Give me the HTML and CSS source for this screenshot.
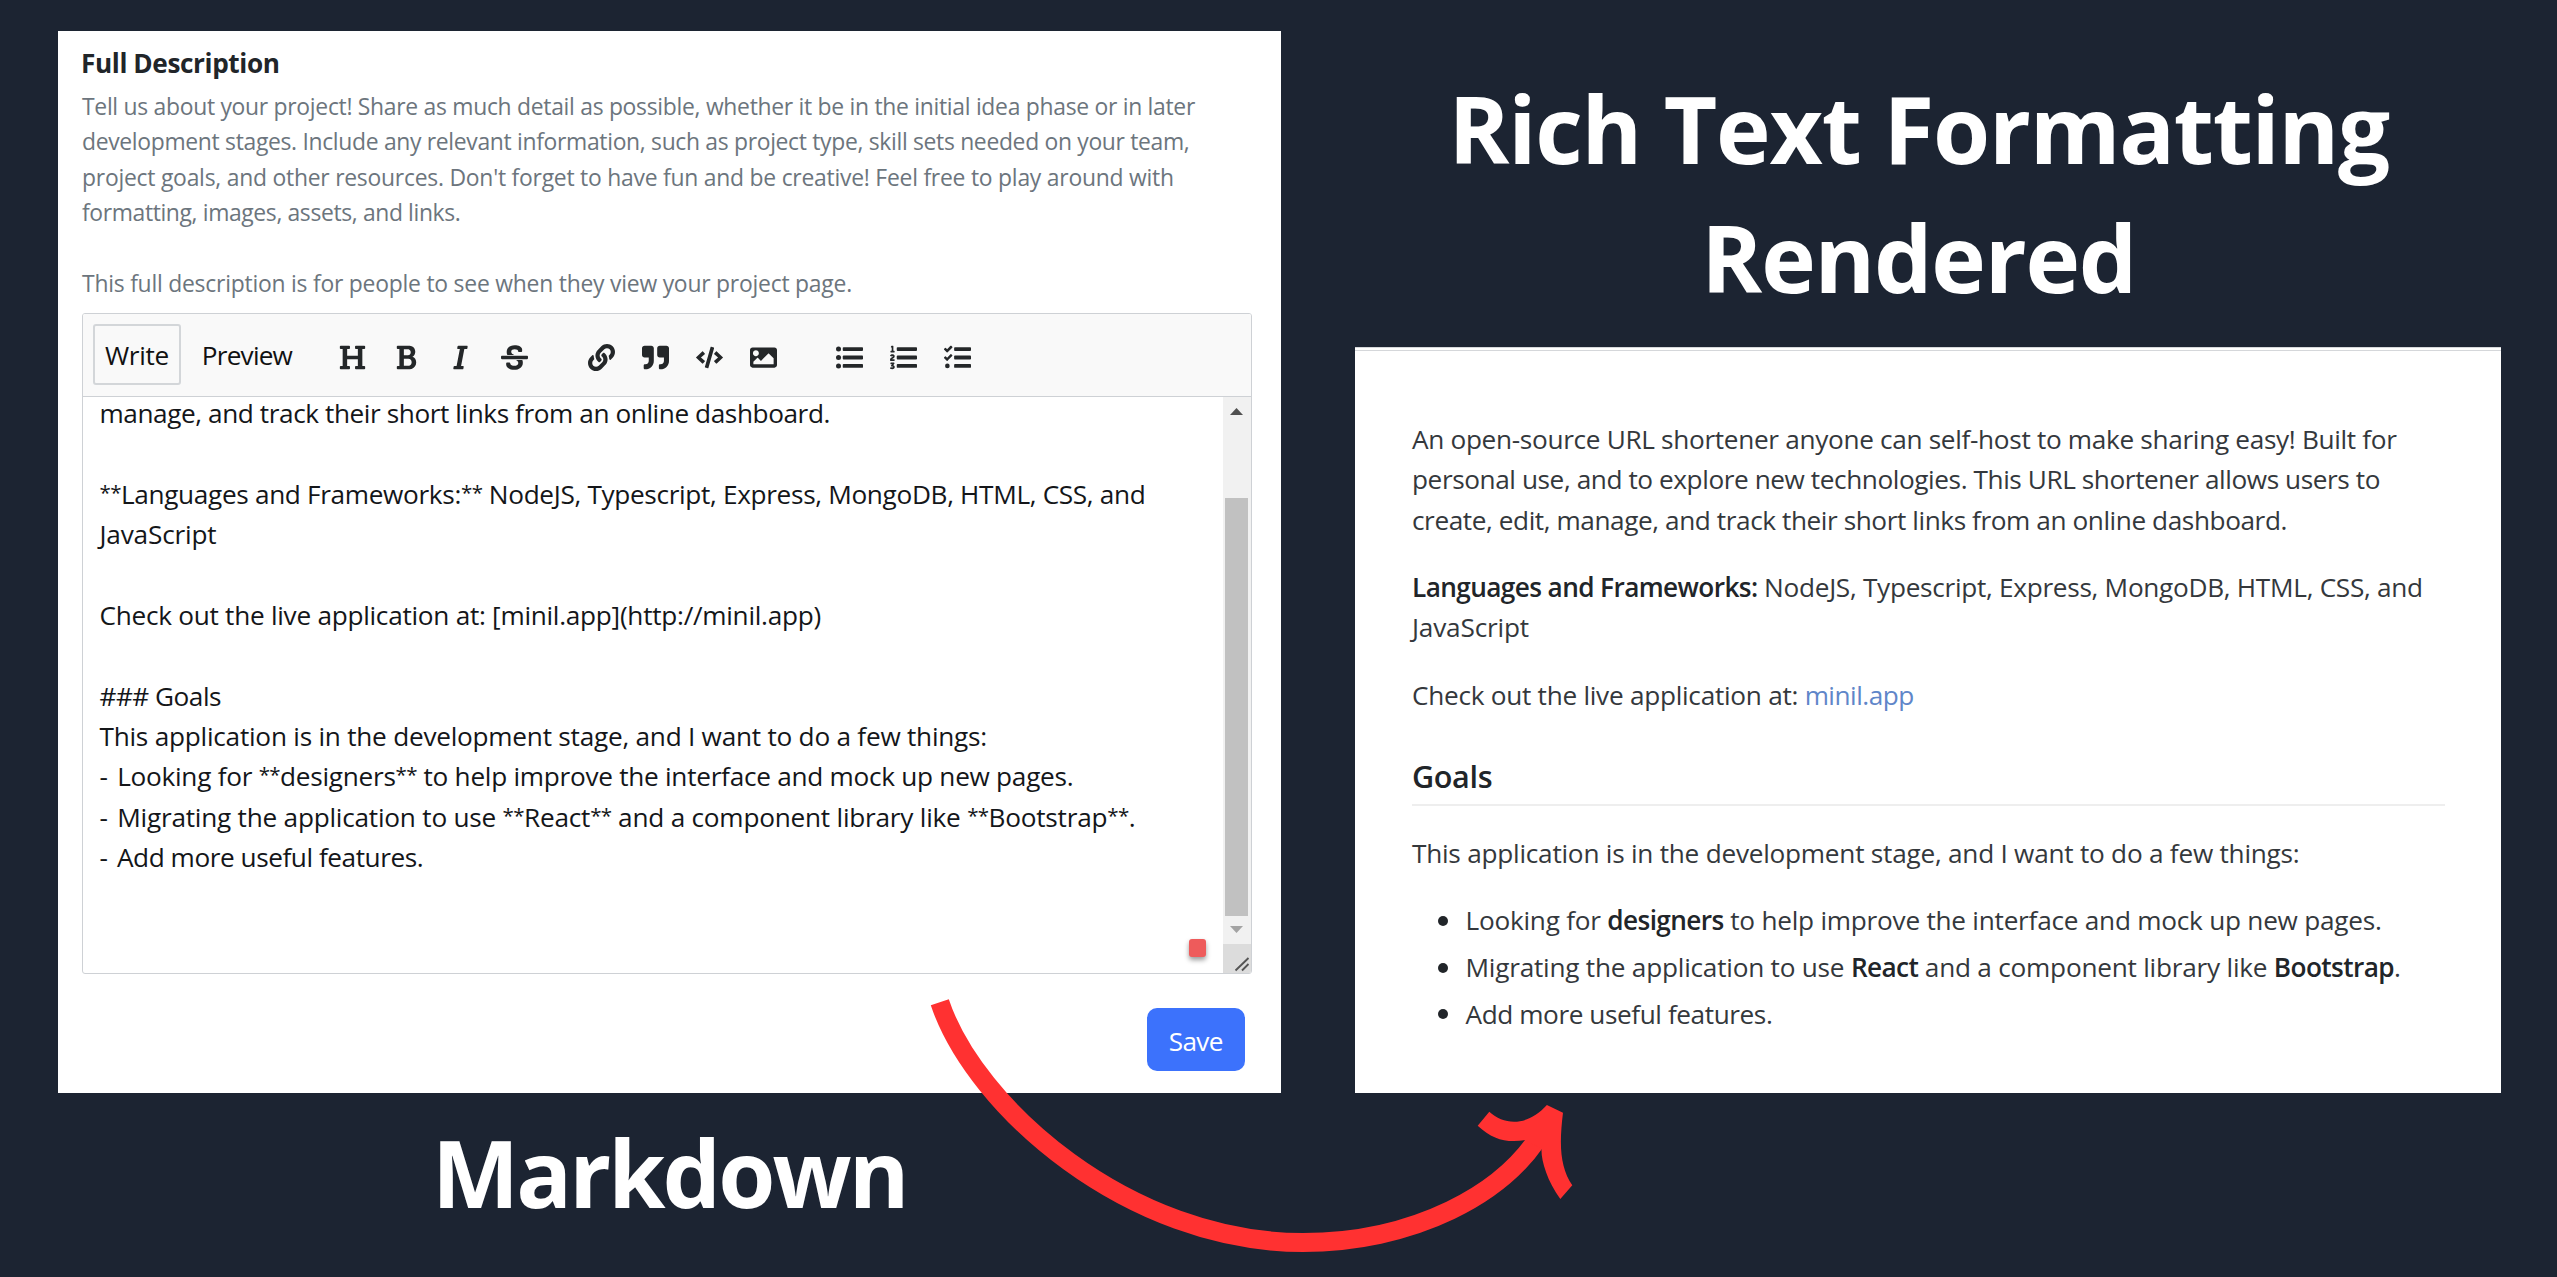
FILE: index.html
```html
<!DOCTYPE html>
<html lang="en">
<head>
<meta charset="utf-8">
<title>Markdown to rich text</title>
<link rel="stylesheet" href="styles.css">
</head>
<body>
<main class="board">
  <section class="column column-left">
    <div class="card editor-card">
      <h2 class="field-title">Full Description</h2>
      <div class="help">
        <span class="line ls-29">Tell us about your project! Share as much detail as possible, whether it be in the initial idea phase or in later</span>
        <span class="line ls-31">development stages. Include any relevant information, such as project type, skill sets needed on your team,</span>
        <span class="line ls-25">project goals, and other resources. Don't forget to have fun and be creative! Feel free to play around with</span>
        <span class="line ls-37">formatting, images, assets, and links.</span>
        <span class="line">&nbsp;</span>
        <span class="line ls-23">This full description is for people to see when they view your project page.</span>
      </div>
      <div class="editor">
        <div class="toolbar">
          <button class="tab tab-active">Write</button>
          <button class="tab tab-preview">Preview</button>
          <div class="tools">
            <svg class="tool" viewBox="0 0 512 512"><path d="M496 80V48c0-8.837-7.163-16-16-16H320c-8.837 0-16 7.163-16 16v32c0 8.837 7.163 16 16 16h37.621v128H154.379V96H192c8.837 0 16-7.163 16-16V48c0-8.837-7.163-16-16-16H32c-8.837 0-16 7.163-16 16v32c0 8.837 7.163 16 16 16h37.275v320H32c-8.837 0-16 7.163-16 16v32c0 8.837 7.163 16 16 16h160c8.837 0 16-7.163 16-16v-32c0-8.837-7.163-16-16-16h-37.621V288H357.62v128H320c-8.837 0-16 7.163-16 16v32c0 8.837 7.163 16 16 16h160c8.837 0 16-7.163 16-16v-32c0-8.837-7.163-16-16-16h-37.275V96H480c8.837 0 16-7.163 16-16z"/></svg>
            <svg class="tool" viewBox="0 0 384 512"><path d="M304.793 243.891c33.639-18.537 53.657-54.16 53.657-95.693 0-48.236-26.25-87.626-68.626-104.179C265.138 34.01 240.849 32 209.661 32H24c-8.837 0-16 7.163-16 16v33.049c0 8.837 7.163 16 16 16h33.113v318.53H24c-8.837 0-16 7.163-16 16V464c0 8.837 7.163 16 16 16h195.69c24.203 0 44.834-1.289 66.866-7.584C337.52 457.193 376 410.647 376 350.014c0-52.168-26.573-91.684-71.207-106.123zM142.217 100.809h67.444c16.294 0 27.536 2.019 37.525 6.717 15.828 8.479 24.906 26.502 24.906 49.446 0 35.029-20.32 56.79-53.029 56.79h-76.846V100.809zm112.642 305.475c-10.14 4.056-22.677 4.907-31.409 4.907h-81.233V281.943h84.367c39.645 0 63.057 25.38 63.057 63.058.001 28.425-13.66 52.483-34.782 61.283z"/></svg>
            <svg class="tool" viewBox="0 0 320 512"><path d="M204.758 416h-33.849l62.092-320h40.725a16 16 0 0 0 15.704-12.937l6.242-32C297.599 41.184 290.034 32 279.968 32H120.235a16 16 0 0 0-15.704 12.937l-6.242 32C96.362 86.816 103.927 96 113.993 96h33.846l-62.09 320H46.278a16 16 0 0 0-15.704 12.935l-6.245 32C22.402 470.815 29.967 480 40.034 480h158.479a16 16 0 0 0 15.704-12.935l6.245-32c1.927-9.88-5.638-19.065-15.704-19.065z"/></svg>
            <svg class="tool" viewBox="0 0 512 512"><path d="M496 288H16c-8.837 0-16-7.163-16-16v-32c0-8.837 7.163-16 16-16h480c8.837 0 16 7.163 16 16v32c0 8.837-7.163 16-16 16zm-214.666 16c27.258 12.937 46.524 28.683 46.524 56.243 0 33.108-28.977 53.676-75.621 53.676-32.325 0-76.874-12.08-76.874-44.271V368c0-8.837-7.164-16-16-16H113.75c-8.836 0-16 7.163-16 16v19.204c0 66.845 77.717 101.82 154.487 101.82 88.578 0 162.013-45.438 162.013-134.424 0-19.815-3.618-36.417-10.143-50.6H281.334zm-30.952-96c-32.422-13.505-56.836-28.946-56.836-59.683 0-33.92 30.901-47.406 64.962-47.406 42.647 0 64.962 16.593 64.962 32.985V136c0 8.837 7.163 16 16 16h45.613c8.836 0 16-7.163 16-16v-30.318c0-52.438-71.725-79.875-142.575-79.875-85.203 0-150.726 40.972-150.726 125.646 0 22.71 4.665 41.176 12.777 56.547h129.823z"/></svg>
          </div>
          <div class="tools">
            <svg class="tool" viewBox="0 0 512 512"><path d="M326.612 185.391c59.747 59.809 58.927 155.698.36 214.59-.11.12-.24.25-.36.37l-67.2 67.2c-59.27 59.27-155.699 59.262-214.96 0-59.27-59.26-59.27-155.7 0-214.96l37.106-37.106c9.84-9.84 26.786-3.3 27.294 10.606.648 17.722 3.826 35.527 9.69 52.721 1.986 5.822.567 12.262-3.783 16.612l-13.087 13.087c-28.026 28.026-28.905 73.66-1.155 101.96 28.024 28.579 74.086 28.749 102.325.51l67.2-67.19c28.191-28.191 28.073-73.757 0-101.83-3.701-3.694-7.429-6.564-10.341-8.569a16.037 16.037 0 0 1-6.947-12.606c-.396-10.567 3.348-21.456 11.698-29.806l21.054-21.055c5.521-5.521 14.182-6.199 20.584-1.731a152.482 152.482 0 0 1 20.522 17.197zM467.547 44.449c-59.261-59.262-155.69-59.27-214.96 0l-67.2 67.2c-.12.12-.25.25-.36.37-58.566 58.892-59.387 154.781.36 214.59a152.454 152.454 0 0 0 20.521 17.196c6.402 4.468 15.064 3.789 20.584-1.731l21.054-21.055c8.35-8.35 12.094-19.239 11.698-29.806a16.037 16.037 0 0 0-6.947-12.606c-2.912-2.005-6.64-4.875-10.341-8.569-28.073-28.073-28.191-73.639 0-101.83l67.2-67.19c28.239-28.239 74.3-28.069 102.325.51 27.75 28.3 26.872 73.934-1.155 101.96l-13.087 13.087c-4.35 4.35-5.769 10.79-3.783 16.612 5.864 17.194 9.042 34.999 9.69 52.721.509 13.906 17.454 20.446 27.294 10.606l37.106-37.106c59.271-59.259 59.271-155.699.001-214.959z"/></svg>
            <svg class="tool" viewBox="0 0 512 512"><path d="M464 32H336c-26.5 0-48 21.5-48 48v128c0 26.5 21.5 48 48 48h80v64c0 35.3-28.7 64-64 64h-8c-13.3 0-24 10.7-24 24v48c0 13.3 10.7 24 24 24h8c88.4 0 160-71.6 160-160V80c0-26.5-21.5-48-48-48zm-288 0H48C21.5 32 0 53.5 0 80v128c0 26.5 21.5 48 48 48h80v64c0 35.3-28.7 64-64 64h-8c-13.3 0-24 10.7-24 24v48c0 13.3 10.7 24 24 24h8c88.4 0 160-71.6 160-160V80c0-26.5-21.5-48-48-48z"/></svg>
            <svg class="tool" viewBox="0 0 640 512"><path d="M278.9 511.5l-61-17.7c-6.4-1.8-10-8.5-8.2-14.9L346.2 8.7c1.8-6.4 8.5-10 14.9-8.2l61 17.7c6.4 1.8 10 8.5 8.2 14.9L293.8 503.3c-1.9 6.4-8.5 10.1-14.9 8.2zm-114-112.2l43.5-46.4c4.6-4.9 4.3-12.7-.8-17.2L117 256l90.6-79.7c5.1-4.5 5.5-12.3.8-17.2l-43.5-46.4c-4.5-4.8-12.1-5.1-17-.5L3.8 247.2c-5.1 4.7-5.1 12.8 0 17.5l144.1 135.1c4.9 4.6 12.5 4.4 17-.5zm327.2.6l144.1-135.1c5.1-4.7 5.1-12.8 0-17.5L492.1 112.1c-4.8-4.5-12.4-4.3-17 .5L431.6 159c-4.6 4.9-4.3 12.7.8 17.2L523 256l-90.6 79.7c-5.1 4.5-5.5 12.3-.8 17.2l43.5 46.4c4.5 4.9 12.1 5.1 17 .6z"/></svg>
            <svg class="tool" viewBox="0 0 512 512"><path d="M464 448H48c-26.51 0-48-21.49-48-48V112c0-26.51 21.49-48 48-48h416c26.51 0 48 21.49 48 48v288c0 26.51-21.49 48-48 48zM112 120c-30.928 0-56 25.072-56 56s25.072 56 56 56 56-25.072 56-56-25.072-56-56-56zM64 384h384V272l-87.515-87.515c-4.686-4.686-12.284-4.686-16.971 0L208 320l-55.515-55.515c-4.686-4.686-12.284-4.686-16.971 0L64 336v48z"/></svg>
          </div>
          <div class="tools">
            <svg class="tool" viewBox="0 0 512 512"><circle cx="48" cy="96" r="48"/><circle cx="48" cy="256" r="48"/><circle cx="48" cy="416" r="48"/><rect x="128" y="60" width="384" height="72" rx="16"/><rect x="128" y="220" width="384" height="72" rx="16"/><rect x="128" y="380" width="384" height="72" rx="16"/></svg>
            <svg class="tool" viewBox="0 0 512 512"><path d="M61.77 401l17.5-20.15a19.92 19.92 0 0 0 5.07-14.19v-3.31C84.34 356 80.5 352 73 352H16a8 8 0 0 0-8 8v16a8 8 0 0 0 8 8h22.83a157.41 157.41 0 0 0-11 12.31l-5.61 7c-4 5.07-5.25 10.13-2.8 14.88l1.05 1.93c3 5.76 6.29 7.88 12.25 7.88h4.73c10.33 0 15.94 2.44 15.94 9.09 0 4.72-4.2 8.22-14.36 8.22a41.54 41.54 0 0 1-15.47-3.12c-6.49-3.88-11.74-3.5-15.6 3.12l-5.59 9.31c-3.72 6.13-3.19 11.72 2.63 15.94 7.71 4.69 20.38 9.44 37 9.44 34.16 0 48.5-22.75 48.5-44.12-.03-14.38-9.12-29.76-28.73-34.88zM16 160h64a8 8 0 0 0 8-8v-16a8 8 0 0 0-8-8H64V40a8 8 0 0 0-8-8H32a8 8 0 0 0-7.14 4.42l-8 16A8 8 0 0 0 24 64h8v64H16a8 8 0 0 0-8 8v16a8 8 0 0 0 8 8zm-3.91 160H80a8 8 0 0 0 8-8v-16a8 8 0 0 0-8-8H41.32c3.29-10.29 48.34-18.68 48.34-56.44 0-29.06-25-39.56-44.47-39.56-21.36 0-33.8 10-40.46 18.75-4.37 5.59-3 10.84 2.8 15.37l8.58 6.88c5.61 4.56 11 2.47 16.12-2.44a13.44 13.44 0 0 1 9.46-3.84c3.33 0 9.28 1.56 9.28 8.75C51 248.19 0 257.31 0 304.59v4C0 316 5.08 320 12.09 320z"/><rect x="128" y="60" width="384" height="72" rx="16"/><rect x="128" y="220" width="384" height="72" rx="16"/><rect x="128" y="380" width="384" height="72" rx="16"/></svg>
            <svg class="tool" viewBox="0 0 512 512"><path d="M139.61 35.5a12 12 0 0 0-17 0L58.93 98.81l-22.7-22.12a12 12 0 0 0-17 0L3.53 92.41a12 12 0 0 0 0 17l47.59 47.4a12.78 12.78 0 0 0 17.61 0l15.59-15.62L156.52 69a12.09 12.09 0 0 0 .09-17zm0 159.19a12 12 0 0 0-17 0l-63.68 63.72-22.7-22.1a12 12 0 0 0-17 0L3.53 252a12 12 0 0 0 0 17L51 316.5a12.77 12.77 0 0 0 17.6 0l15.7-15.69 72.2-72.22a12 12 0 0 0 .09-16.9z"/><circle cx="64" cy="416" r="44"/><rect x="192" y="60" width="320" height="72" rx="16"/><rect x="192" y="220" width="320" height="72" rx="16"/><rect x="192" y="380" width="320" height="72" rx="16"/></svg>
          </div>
        </div>
        <div class="textarea">
          <div class="source">
            <span class="line ls-41">manage, and track their short links from an online dashboard.</span>
            <span class="line">&nbsp;</span>
            <span class="line ls-33"><span class="mark">**</span>Languages and Frameworks:<span class="mark">**</span> NodeJS, Typescript, Express, MongoDB, HTML, CSS, and</span>
            <span class="line ls-20">JavaScript</span>
            <span class="line">&nbsp;</span>
            <span class="line ls-27">Check out the live application at: [minil.app](http://minil.app)</span>
            <span class="line">&nbsp;</span>
            <span class="line ls-50">### Goals</span>
            <span class="line ls-25">This application is in the development stage, and I want to do a few things:</span>
            <span class="line ls-27"><span class="dash">-</span> Looking for <span class="mark">**</span>designers<span class="mark">**</span> to help improve the interface and mock up new pages.</span>
            <span class="line ls-23"><span class="dash">-</span> Migrating the application to use <span class="mark">**</span>React<span class="mark">**</span> and a component library like <span class="mark">**</span>Bootstrap<span class="mark">**</span>.</span>
            <span class="line ls-45"><span class="dash">-</span> Add more useful features.</span>
          </div>
          <div class="badge"></div>
          <div class="scrollbar">
            <svg class="caret" viewBox="0 0 13 7"><path d="M0 7 6.5 0 13 7z" fill="#505050"/></svg>
            <div class="thumb"></div>
            <svg class="caret" viewBox="0 0 13 7"><path d="M0 0 6.5 7 13 0z" fill="#a3a3a3"/></svg>
            <svg class="grip" viewBox="0 0 28 29"><path d="M12.5 26.5 25.5 14M19 26.5l6.500-6.500" fill="none" stroke="#555" stroke-width="1.900"/></svg>
          </div>
        </div>
      </div>
      <button class="save">Save</button>
    </div>
    <h1 class="caption caption-left">Markdown</h1>
  </section>
  <section class="column column-right">
    <h1 class="caption caption-right">Rich Text Formatting<br>Rendered</h1>
    <article class="card rendered">
      <p>
        <span class="line ls-31">An open-source URL shortener anyone can self-host to make sharing easy! Built for</span>
        <span class="line ls-41">personal use, and to explore new technologies. This URL shortener allows users to</span>
        <span class="line ls-41">create, edit, manage, and track their short links from an online dashboard.</span>
      </p>
      <p>
        <span class="line ls-29"><strong>Languages and Frameworks:</strong> NodeJS, Typescript, Express, MongoDB, HTML, CSS, and</span>
        <span class="line ls-20">JavaScript</span>
      </p>
      <p><span class="line ls-27">Check out the live application at: <a class="link" href="#">minil.app</a></span></p>
      <h3 class="subhead">Goals</h3>
      <p><span class="line ls-25">This application is in the development stage, and I want to do a few things:</span></p>
      <ul class="goals">
        <li><span class="line ls-25">Looking for <strong>designers</strong> to help improve the interface and mock up new pages.</span></li>
        <li><span class="line ls-23">Migrating the application to use <strong>React</strong> and a component library like <strong>Bootstrap</strong>.</span></li>
        <li><span class="line ls-41">Add more useful features.</span></li>
      </ul>
    </article>
  </section>
  <svg class="arrow" viewBox="0 0 2557 1277">
    <path class="arrow-shaft" d="M939.800 1002.300C975 1107 1128 1242.500 1303 1242.500C1405 1242.500 1512 1199 1551 1115"/>
    <path d="M1489.300 1111.700C1505 1126 1528 1126 1546.900 1105L1563 1112.700C1559 1145 1560 1167 1572.300 1185.300L1560.300 1199C1547 1181 1541 1160 1541.500 1149L1525.900 1140C1507 1143 1493 1140 1477.700 1125.700Z"/>
  </svg>
</main>
</body>
</html>
```
FILE: styles.css
```css
* { box-sizing: border-box; }

body {
  margin: 0;
  background: #1c2432;
  color: #212529;
  font-family: "Open Sans", "Noto Sans", sans-serif;
  font-size: 26.2px;
  line-height: 40.35px;
}

h1, h2, h3, p, ul { margin: 0; }

button {
  font: inherit;
  color: inherit;
  border: 0;
  background: none;
  padding: 0;
}

.board {
  position: relative;
  display: grid;
  grid-template-columns: 1222.500px 1146.500px;
  column-gap: 74px;
  width: 2557px;
  height: 1277px;
  padding-left: 58px;
  overflow: hidden;
}

.column { display: flex; flex-direction: column; }
.column-left { padding-top: 30.500px; }

.card { background: #fff; }

.line { display: block; white-space: nowrap; }
.ls-20 { letter-spacing: -0.19px; }
.ls-23 { letter-spacing: -0.23px; }
.ls-25 { letter-spacing: -0.24px; }
.ls-27 { letter-spacing: -0.27px; }
.ls-29 { letter-spacing: -0.29px; }
.ls-31 { letter-spacing: -0.32px; }
.ls-33 { letter-spacing: -0.33px; }
.ls-37 { letter-spacing: -0.37px; }
.ls-41 { letter-spacing: -0.42px; }
.ls-45 { letter-spacing: -0.45px; }
.ls-50 { letter-spacing: -0.5px; }

/* Editor card */
.editor-card {
  display: flex;
  flex-direction: column;
  height: 1062px;
  padding: 12px 29px 0 24px;
}

.field-title {
  margin-left: -1px;
  font-size: 26.2px;
  font-weight: 700;
  letter-spacing: -0.4px;
}

.help {
  margin-top: 6.200px;
  color: #6c757d;
  font-size: 22.9px;
  line-height: 35.35px;
}

.editor {
  display: flex;
  flex-direction: column;
  height: 661px;
  margin-top: 12px;
  border: 1.7px solid #ced1d5;
  border-radius: 3px;
  overflow: hidden;
}

.toolbar {
  display: flex;
  align-items: center;
  height: 82.500px;
  padding: 0 0 0 10px;
  background: #f9f9f9;
  border-bottom: 1.7px solid #ced1d5;
  color: #111;
}

.tab {
  height: 61px;
  border: 2px solid transparent;
  border-radius: 3px;
  letter-spacing: -0.3px;
}
.tab-active { width: 88px; border-color: #d3d6d9; }
.tab-preview {
  width: 110px;
  margin-left: 11px;
  letter-spacing: -0.8px;
}

.tools {
  display: flex;
  gap: 27px;
  margin: 6px 0 0 59.500px;
}
.tab-preview + .tools { margin-left: 37px; }

.tool {
  width: 27px;
  height: 27px;
  fill: #242729;
}

.textarea {
  position: relative;
  display: flex;
  flex: 1;
  min-height: 0;
}

.source {
  flex: 1;
  margin-top: -3.500px;
  padding-left: 16.500px;
  color: #141619;
}
.mark {
  font-size: 20.5px;
  line-height: 0;
  letter-spacing: -0.6px;
  vertical-align: 4px;
}
.dash { letter-spacing: 2.7px; }

.badge {
  position: absolute;
  right: 45px;
  bottom: 16px;
  width: 17px;
  height: 18px;
  border-radius: 3px;
  background: #ee5b5b;
  box-shadow: 0 3px 5px rgba(0, 0, 0, 0.4);
}

.scrollbar {
  display: flex;
  flex-direction: column;
  align-items: center;
  width: 28px;
  padding-top: 11px;
  background: #f1f1f1;
}
.caret { width: 13px; height: 7px; }
.thumb {
  width: 23px;
  height: 418px;
  margin: 83.500px 0 10px;
  background: #c1c1c1;
}
.grip {
  width: 28px;
  height: 29px;
  margin-top: auto;
  background: #dcdcdc;
}

.save {
  align-self: flex-end;
  width: 98.500px;
  height: 63.500px;
  margin: 33.500px 6.500px 0 0;
  padding-top: 3px;
  border-radius: 10px;
  background: #3c72fc;
  color: #fff;
  letter-spacing: -0.65px;
}

/* Captions */
.caption {
  color: #fff;
  font-size: 92.4px;
  font-weight: 700;
  line-height: 129px;
  letter-spacing: -1.2px;
  text-align: center;
}
.caption-left { margin-top: 15px; letter-spacing: -2.9px; }
.caption-right { padding: 64px 18px 0 0; height: 347px; }

/* Rendered card */
.rendered {
  height: 745.500px;
  padding: 68px 56px 0 57.500px;
  border-top: 4px double #d5d7da;
  color: #34383c;
}
.rendered p { margin-bottom: 27px; }
.rendered strong {
  color: #212529;
  font-weight: 600;
  letter-spacing: -0.6px;
}

.link {
  color: #5f86c9;
  letter-spacing: -0.5px;
  text-decoration: none;
}

.subhead {
  margin: 41px 0 27px;
  padding-bottom: 8px;
  border-bottom: 2px solid #eee;
  color: #212529;
  font-size: 30.6px;
  font-weight: 600;
  line-height: 40px;
  letter-spacing: -0.38px;
}

.goals {
  display: flex;
  flex-direction: column;
  gap: 6.600px;
  padding: 0;
  list-style: none;
}
.goals li {
  display: flex;
  align-items: center;
  gap: 18px;
  padding-left: 25.500px;
}
.goals li::before {
  content: "";
  width: 10px;
  height: 10px;
  border-radius: 50%;
  background: #212529;
}

/* Arrow drawn over both cards */
.arrow {
  position: absolute;
  top: 0;
  left: 0;
  width: 2557px;
  height: 1277px;
  fill: #ff3131;
  pointer-events: none;
}
.arrow-shaft {
  fill: none;
  stroke: #ff3131;
  stroke-width: 19px;
}
```
